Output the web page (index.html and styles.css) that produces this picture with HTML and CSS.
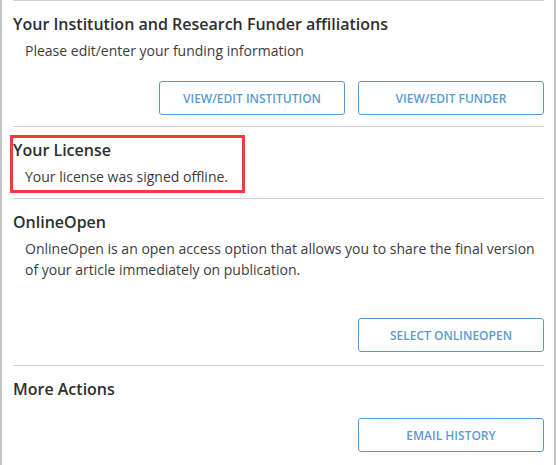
FILE: index.html
```html
<!DOCTYPE html>
<html>
<head>
<meta charset="utf-8">
<link rel="stylesheet" href="styles.css">
</head>
<body>
<div class="panel">
  <section class="section">
    <h2 class="title">Your Institution and Research Funder affiliations</h2>
    <p class="desc">Please edit/enter your funding information</p>
    <div class="actions">
      <button class="btn">VIEW/EDIT INSTITUTION</button>
      <button class="btn">VIEW/EDIT FUNDER</button>
    </div>
  </section>
  <section class="section section-license">
    <h2 class="title">Your License</h2>
    <p class="desc">Your license was signed offline.</p>
    <div class="highlight"></div>
  </section>
  <section class="section section-open">
    <h2 class="title">OnlineOpen</h2>
    <p class="desc">OnlineOpen is an open access option that allows you to share the final version of your article immediately on publication.</p>
    <div class="actions actions-far">
      <button class="btn">SELECT ONLINEOPEN</button>
    </div>
  </section>
  <section class="section">
    <h2 class="title">More Actions</h2>
    <div class="actions actions-near">
      <button class="btn">EMAIL HISTORY</button>
    </div>
  </section>
</div>
</body>
</html>
```
FILE: styles.css
```css
html, body {
  margin: 0;
  padding: 0;
  background: #ffffff;
}
body {
  font-family: "Open Sans", "Liberation Sans", sans-serif;
  color: #333333;
}
.panel {
  box-sizing: border-box;
  width: 556px;
  min-height: 465px;
  border-left: 2px solid #c4c4c4;
  border-right: 2px solid #c4c4c4;
  padding: 0 10px 0 11px;
}
.section {
  position: relative;
  border-top: 1px solid #d2d2d2;
  padding: 12px 0 11px 0;
}
.section-open {
  padding-bottom: 13px;
}
.title {
  margin: 0;
  font-size: 16px;
  line-height: 22px;
  font-weight: 600;
  color: #2e2e2e;
}
.desc {
  margin: 5px 0 0 12px;
  font-size: 14px;
  line-height: 21px;
  color: #3c3c3c;
}
.actions {
  display: flex;
  justify-content: flex-end;
  gap: 13px;
  margin-top: 20px;
}
.actions-far {
  margin-top: 38px;
}
.actions-near {
  margin-top: 18px;
}
.btn {
  width: 186px;
  height: 34px;
  box-sizing: border-box;
  background: #ffffff;
  border: 1px solid #5a9acf;
  border-radius: 3px;
  color: #5b9bd2;
  font-family: "Open Sans", "Liberation Sans", sans-serif;
  font-size: 12px;
  font-weight: 600;
  padding: 0;
}
.highlight {
  position: absolute;
  left: -3px;
  top: 8px;
  width: 235px;
  height: 58px;
  box-sizing: border-box;
  border: 3px solid #f33b3b;
  pointer-events: none;
}
```
